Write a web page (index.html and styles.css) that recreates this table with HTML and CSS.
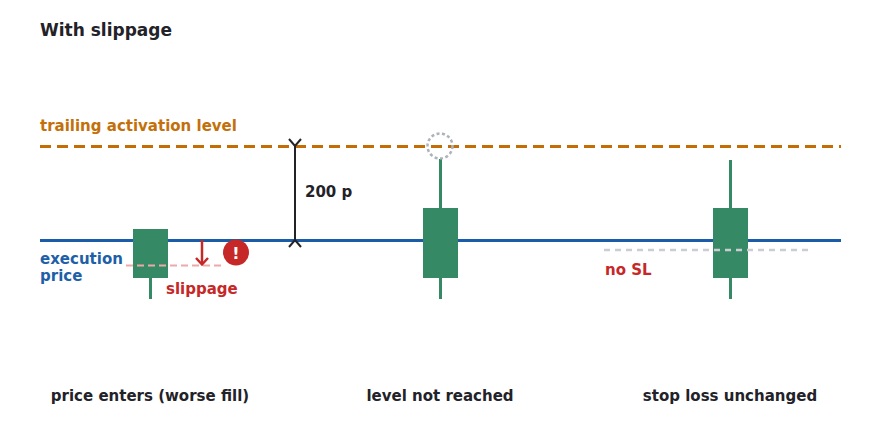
FILE: index.html
```html
<!DOCTYPE html>
<html lang="en">
<head>
<meta charset="utf-8">
<title>With slippage</title>
<link rel="stylesheet" href="styles.css">
</head>
<body>
<main class="page">
  <h1 class="title">With slippage</h1>
  <svg class="chart" width="880" height="340" viewBox="0 40 880 340" xmlns="http://www.w3.org/2000/svg">
    <!-- trailing activation level -->
    <text class="lbl lbl-orange" x="40" y="131">trailing activation level</text>
    <line class="lvl-orange" x1="40" y1="146.5" x2="841" y2="146.5"/>

    <!-- execution price -->
    <line class="lvl-blue" x1="40" y1="240.5" x2="841" y2="240.5"/>
    <text class="lbl lbl-blue" x="40" y="264">execution</text>
    <text class="lbl lbl-blue" x="40" y="281">price</text>

    <!-- distance marker -->
    <line class="dim" x1="295" y1="146" x2="295" y2="240"/>
    <path class="dim" d="M289 139 L295 146 L301 139"/>
    <path class="dim" d="M289 247 L295 240 L301 247"/>
    <text class="lbl lbl-dark" x="305" y="197">200 p</text>

    <!-- candle 1 -->
    <line class="wick" x1="150.5" y1="277" x2="150.5" y2="299"/>
    <rect class="body" x="133" y="229" width="35" height="49"/>
    <line class="slip" x1="126" y1="265.5" x2="222" y2="265.5"/>
    <line class="arrow" x1="202" y1="240" x2="202" y2="264"/>
    <path class="arrow" d="M196 258 L202 264.5 L208 258"/>
    <circle class="warn" cx="236" cy="252.5" r="13"/>
    <text class="warn-mark" x="236" y="258.5">!</text>
    <text class="lbl lbl-red" x="166" y="294">slippage</text>

    <!-- candle 2 -->
    <line class="wick" x1="440.5" y1="159" x2="440.5" y2="299"/>
    <rect class="body" x="423" y="208" width="35" height="70"/>
    <circle class="target" cx="440" cy="146" r="12.5"/>

    <!-- candle 3 -->
    <line class="wick" x1="730.5" y1="160" x2="730.5" y2="299"/>
    <rect class="body" x="713" y="208" width="35" height="70"/>
    <line class="nosl" x1="604" y1="250" x2="808" y2="250"/>
    <text class="lbl lbl-red" x="605" y="275">no SL</text>
  </svg>
  <div class="captions">
    <div class="caption">price enters (worse fill)</div>
    <div class="caption">level not reached</div>
    <div class="caption">stop loss unchanged</div>
  </div>
</main>
</body>
</html>
```

FILE: styles.css
```css
html, body {
  margin: 0;
  padding: 0;
  background: #ffffff;
}

.page {
  width: 880px;
  height: 440px;
  font-family: "DejaVu Sans", "Liberation Sans", sans-serif;
  font-weight: bold;
  color: #222228;
}

.title {
  margin: 0;
  padding: 20px 0 0 40px;
  font-size: 17px;
  line-height: 20px;
  font-weight: bold;
  color: #222228;
}

.chart {
  display: block;
}

.lbl {
  font-family: "DejaVu Sans", "Liberation Sans", sans-serif;
  font-weight: bold;
  font-size: 15px;
}

.lbl-orange { fill: #c4700a; }
.lbl-blue { fill: #1e5fa8; }
.lbl-dark { fill: #222228; }
.lbl-red { fill: #c62828; }

.lvl-orange {
  stroke: #c46d04;
  stroke-width: 3;
  stroke-dasharray: 11 6;
}

.lvl-blue {
  stroke: #1a5ca8;
  stroke-width: 3;
}

.dim {
  stroke: #222228;
  stroke-width: 2;
  fill: none;
}

.wick {
  stroke: #358a65;
  stroke-width: 3;
}

.body {
  fill: #358a65;
}

.slip {
  stroke: #eda9a9;
  stroke-width: 2;
  stroke-dasharray: 7 4;
}

.arrow {
  stroke: #c62828;
  stroke-width: 2.5;
  fill: none;
}

.warn {
  fill: #c62828;
}

.warn-mark {
  fill: #ffffff;
  font-family: "DejaVu Sans", "Liberation Sans", sans-serif;
  font-weight: bold;
  font-size: 16px;
  text-anchor: middle;
}

.target {
  fill: none;
  stroke: #aeb2bb;
  stroke-width: 2.5;
  stroke-dasharray: 3 2.5;
}

.nosl {
  stroke: #cbcdd4;
  stroke-width: 2.5;
  stroke-dasharray: 6 5;
}

.captions {
  display: grid;
  grid-template-columns: repeat(3, 290px);
  padding: 7px 0 0 5px;
}

.caption {
  text-align: center;
  font-size: 15px;
  line-height: 18px;
  color: #222228;
}
```
